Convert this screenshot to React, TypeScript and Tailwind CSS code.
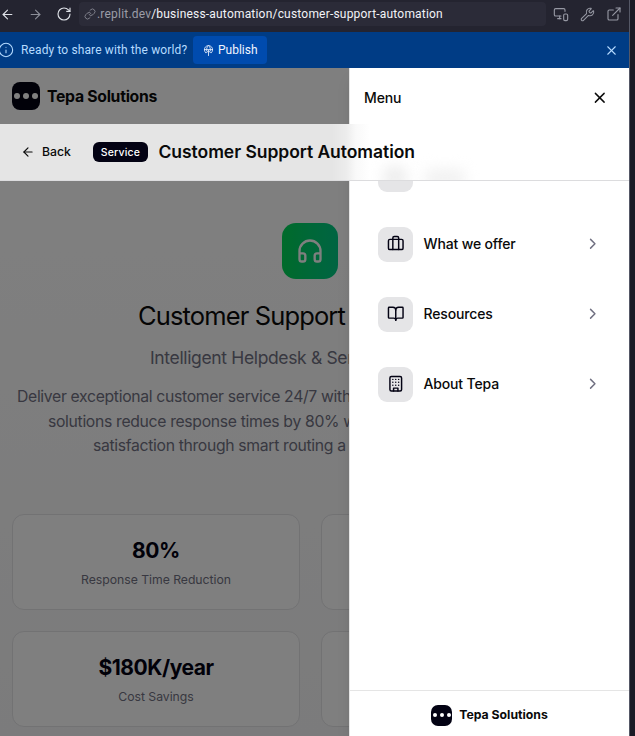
import type { ReactNode } from "react";
import {
  ArrowLeft,
  ArrowRight,
  BookOpen,
  ChevronRight,
  ExternalLink,
  Headphones,
  Info,
  Link,
  MonitorSmartphone,
  RotateCw,
  Wrench,
  X,
} from "lucide-react";

const Briefcase = () => (
  <svg className="size-[17.5px]" viewBox="0 0 24 24" fill="none" stroke="currentColor" strokeWidth="2" strokeLinecap="round" strokeLinejoin="round">
    <path d="M16 20V4a2 2 0 0 0-2-2h-4a2 2 0 0 0-2 2v16" />
    <rect width="20" height="14" x="2" y="6" rx="2" />
  </svg>
);

const Building = () => (
  <svg className="size-[17.5px]" viewBox="0 0 24 24" fill="none" stroke="currentColor" strokeWidth="2" strokeLinecap="round" strokeLinejoin="round">
    <rect width="16" height="20" x="4" y="2" rx="2" />
    <path d="M9 22v-4h6v4M8 6h.01M16 6h.01M12 6h.01M12 10h.01M12 14h.01M16 10h.01M16 14h.01M8 10h.01M8 14h.01" />
  </svg>
);

const GlobeUp = () => (
  <svg className="size-[11px]" viewBox="0 0 24 24" fill="none" stroke="currentColor" strokeWidth="1.8" strokeLinecap="round" strokeLinejoin="round">
    <path d="M6 17A9 9 0 1 1 18 17M3 10h18M8 13c-1-5 1-9 4-12 3 3 5 7 4 12M12 23V12M7.500 17 12 12.500 16.500 17" />
  </svg>
);

const menu: { label: string; icon: ReactNode }[] = [
  { label: "What we offer", icon: <Briefcase /> },
  { label: "Resources", icon: <BookOpen className="size-[17.5px]" /> },
  { label: "About Tepa", icon: <Building /> },
];

function Stat({ value, label }: { value?: string; label?: string }) {
  return (
    <div className="flex h-[96px] flex-col items-center rounded-[12px] border border-[#e4e4e7] bg-white pt-[22px]">
      <div className="text-[21px] leading-[28px] font-bold tracking-[-0.45px] text-[#030213]">{value}</div>
      <div className="mt-[6px] text-[12.25px] leading-[18px] tracking-[-0.04px] text-[#717182]">{label}</div>
    </div>
  );
}

function BrowserBar() {
  return (
    <div className="flex h-8 shrink-0 items-center bg-[#242430] pb-1 font-['Roboto',sans-serif] text-[#dfe2e8]">
      <ArrowLeft className="size-[15px] shrink-0" strokeWidth={1.7} />
      <ArrowRight className="ml-[13px] size-[15px] shrink-0 text-[#8c8e98]" strokeWidth={1.7} />
      <RotateCw className="ml-[13px] size-[16px] shrink-0" strokeWidth={1.7} />
      <div className="ml-[7px] flex h-6 w-[467px] shrink-0 items-center rounded-[4px] bg-[#2b2b38] pl-[5px]">
        <Link className="size-[12px] text-[#8c8e98]" strokeWidth={1.7} />
        <span className="ml-[1px] text-[12px] tracking-[0.2px] whitespace-nowrap text-[#9b9da7]">
          .replit.dev<span className="text-[#f2f3f7]">/business-automation/customer-support-automation</span>
        </span>
      </div>
      <div className="ml-[7px] flex items-center gap-[11px] text-[#9698a3]">
        <MonitorSmartphone className="size-[16px]" strokeWidth={1.7} />
        <Wrench className="size-[15px]" strokeWidth={1.7} />
        <ExternalLink className="size-[16px]" strokeWidth={1.7} />
      </div>
    </div>
  );
}

function Banner() {
  return (
    <div className="flex h-9 shrink-0 items-center bg-[#003c85] font-['Roboto',sans-serif] text-[12px] text-[#b5dbff]">
      <Info className="-ml-[2px] size-[16px] shrink-0" strokeWidth={1.6} />
      <span className="ml-[7px] w-[172px] tracking-[0.12px] whitespace-nowrap">Ready to share with the world?</span>
      <button className="flex h-7 w-[74px] items-center gap-1 rounded-[4px] bg-[#004bae] pl-[10px] text-[#f0f5ff]">
        <GlobeUp />
        <span>Publish</span>
      </button>
      <X className="mr-[10px] ml-auto size-[15px]" strokeWidth={1.7} />
    </div>
  );
}

export default function App() {
  return (
    <div className="flex h-[736px] w-[635px] overflow-hidden bg-[#1a1b26] font-['Inter',sans-serif]">
      <div className="flex w-[629px] shrink-0 flex-col">
        <BrowserBar />
        <Banner />
        <div className="relative min-h-0 flex-1 overflow-hidden bg-white">
          <header className="flex h-14 items-center pl-3">
            <div className="flex size-7 items-center justify-center gap-[3px] rounded-[8px] bg-[#030213]">
              <i className="size-[6px] rounded-full bg-white" />
              <i className="size-[6px] rounded-full bg-white" />
              <i className="size-[6px] rounded-full bg-white" />
            </div>
            <span className="ml-[7px] pt-[2px] text-[15.75px] font-bold tracking-[-0.28px] text-[#0a0a0a]">Tepa Solutions</span>
          </header>

          <main className="mt-[57px] h-[555px] bg-linear-to-b from-white to-[#f7f7f8]">
            <div className="w-[621px] px-3 pt-[42px]">
              <div className="ml-[270px] flex size-14 items-center justify-center rounded-[14px] bg-linear-to-r from-[#00d655] to-[#00c985] text-white">
                <Headphones className="size-7" />
              </div>
              <h1 className="mt-[19px] pl-[126px] text-[25.5px] leading-[36px] tracking-[-0.87px] whitespace-nowrap text-[#0a0a0a]">
                Customer Support
              </h1>
              <p className="mt-[12px] pl-[138px] text-[17.5px] leading-[24px] tracking-[-0.35px] whitespace-nowrap text-[#717182]">
                Intelligent Helpdesk &amp; Ser
              </p>
              <div className="mt-[15px] text-[15.75px] leading-[24.5px] tracking-[-0.33px] whitespace-nowrap text-[#717182]">
                <p className="pl-[5px]">Deliver exceptional customer service 24/7 with</p>
                <p className="pl-[36px]">solutions reduce response times by 80% w</p>
                <p className="pl-[81px]">satisfaction through smart routing a</p>
              </div>
              <div className="mt-[55.5px] grid grid-cols-2 gap-x-[21px] gap-y-[21px]">
                <Stat value="80%" label="Response Time Reduction" />
                <Stat />
                <Stat value="$180K/year" label="Cost Savings" />
                <Stat />
              </div>
            </div>
          </main>

          <div className="absolute inset-0 bg-black/50" />

          <aside className="absolute inset-y-0 right-0 flex w-[280px] flex-col border-l border-[#e5e5e5] bg-white text-[#0a0a0a] shadow-lg">
            <div className="flex h-[59px] shrink-0 items-center justify-between pr-[21px] pl-[14px]">
              <span className="text-[14px] font-medium tracking-[-0.1px]">Menu</span>
              <X className="size-[17.5px]" strokeWidth={2} />
            </div>
            <nav className="flex-1 pt-[12px]">
              <div className="flex h-[70px] items-center pl-[28px]">
                <span className="size-[35px] rounded-[9px] bg-[#e5e5e7]" />
              </div>
              {menu.map((item) => (
                <div key={item.label} className="flex h-[70px] items-center px-[28px]">
                  <span className="flex size-[35px] items-center justify-center rounded-[9px] bg-[#e5e5e7] text-[#030213]">{item.icon}</span>
                  <span className="-mt-px ml-[10.5px] text-[14px] font-medium tracking-[-0.15px]">{item.label}</span>
                  <ChevronRight className="ml-auto size-[17.5px] text-[#717182]" />
                </div>
              ))}
            </nav>
            <div className="flex h-[46px] shrink-0 items-center justify-center border-t border-[#e5e5e5] pt-[3px]">
              <div className="flex size-[21px] items-center justify-center gap-[3px] rounded-[7px] bg-[#030213]">
                <i className="size-1 rounded-full bg-white" />
                <i className="size-1 rounded-full bg-white" />
                <i className="size-1 rounded-full bg-white" />
              </div>
              <span className="ml-[7px] text-[12.25px] font-bold">Tepa Solutions</span>
            </div>
          </aside>

          <div className="absolute inset-x-0 top-14 flex h-[57px] items-center overflow-hidden border-b border-[#dcdcde] bg-[linear-gradient(to_right,#e5e5e5_332px,#ececec_346px,#f9f9f9_356px,#ffffff_370px)] text-[#0a0a0a]">
            {/* Frosted traces of the menu row scrolled behind the bar */}
            <i className="absolute top-[42px] left-[383px] h-[22px] w-[24px] rounded-full bg-[#ececec] blur-[7px]" />
            <i className="absolute top-[45px] left-[424px] h-[18px] w-[42px] rounded-full bg-[#f1f1f1] blur-[7px]" />
            <ArrowLeft className="ml-[21px] size-[14px]" strokeWidth={2} />
            <span className="ml-[7px] w-[51px] text-[12.25px] font-medium">Back</span>
            <span className="flex h-5 w-[55px] items-center justify-center rounded-[6px] bg-[#030213] pt-px text-[10.5px] font-medium tracking-[0.2px] text-white">Service</span>
            <span className="relative ml-[10.5px] text-[17.5px] font-semibold tracking-[-0.05px] whitespace-nowrap">Customer Support Automation</span>
          </div>
        </div>
      </div>
      <div className="w-px bg-[#555866]" />
    </div>
  );
}
